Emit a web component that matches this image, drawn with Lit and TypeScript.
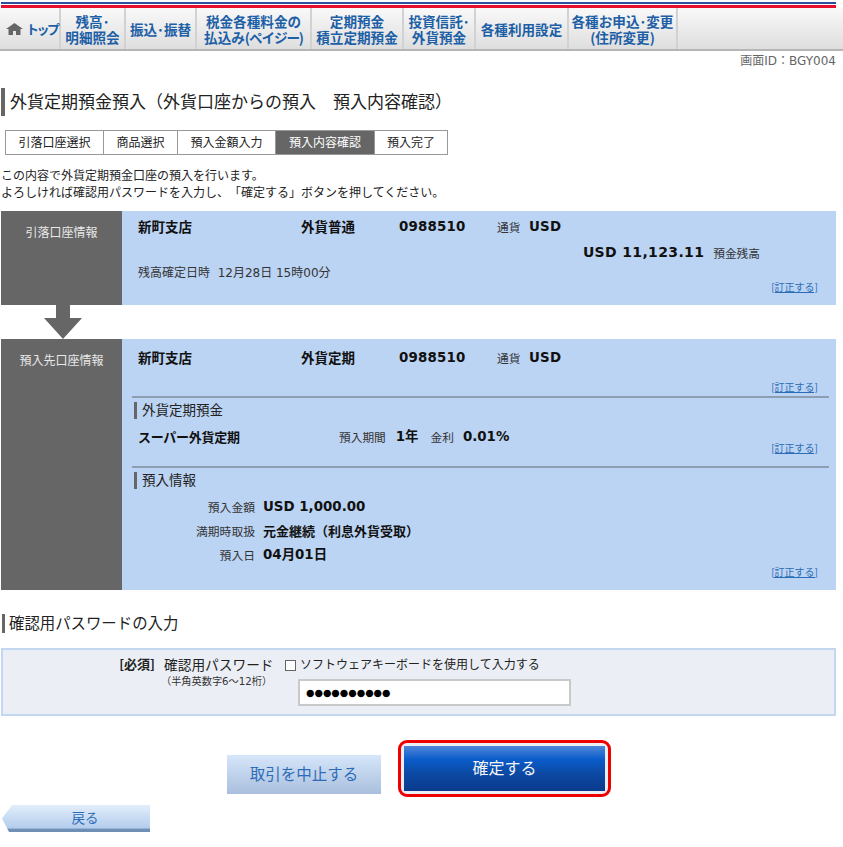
import { LitElement, html, css } from "lit";
import { customElement } from "lit/decorators.js";

@customElement("app-root")
export class AppRoot extends LitElement {
  static styles = css`
    :host { display: block; width: 843px; height: 847px; overflow: hidden; background: #fff; color: #222; font-family: "Noto Sans CJK JP", "DejaVu Sans", sans-serif; font-size: 12px; line-height: 17px; text-spacing-trim: space-all; }
    .stripe { margin: 2px 7px 0 1px; height: 6px; box-sizing: border-box; border-top: 2px solid #2f4f9f; background: linear-gradient(#fff 0 1px, #e60f2d 1px); }
    nav { display: flex; height: 43px; box-sizing: border-box; border-bottom: 2px solid #b5b5b5; background: linear-gradient(#f9f9f9, #dedede); padding-left: 1px; }
    nav a { display: flex; align-items: center; justify-content: center; text-align: center; white-space: nowrap; box-sizing: border-box; border-right: 2px solid #d2d2d2; font-size: 13.6px; font-weight: 700; line-height: 16px; color: #1d5fa6; }
    nav a.top { gap: 3px; font-size: 13px; letter-spacing: -2.5px; justify-content: flex-start; padding-left: 5px; }
    .tight { letter-spacing: -1.1px; }
    .sid { text-align: right; padding-right: 7px; height: 20px; line-height: 20px; color: #666; font-size: 12px; font-family: "DejaVu Sans", "Noto Sans CJK JP", sans-serif; }
    h1 { margin: 17px 0 0 1px; height: 28px; border-left: 4px solid #666; padding-left: 5px; font-size: 17px; font-weight: 400; line-height: 26px; color: #222; }
    .steps { display: flex; margin: 14px 0 0 5px; width: 443px; height: 25px; box-sizing: border-box; border: 1px solid #999; }
    .steps div { display: flex; align-items: center; justify-content: center; box-sizing: border-box; border-right: 1px solid #999; padding-bottom: 2px; font-size: 12px; }
    .steps div:last-child { border-right: 0; }
    .steps .on { background: #666; color: #fff; }
    .msg { margin: 11px 0 0 1px; line-height: 17px; }
    .panel { display: flex; margin: 11px 7px 0 1px; background: #bcd4f3; }
    .side { flex: none; width: 121px; background: #666; color: #e8e8e8; text-align: center; font-size: 12px; padding-top: 12px; box-sizing: border-box; }
    .body { flex: 1; padding: 6px 7px 0 10px; }
    .p1 { height: 94px; }
    .row { display: grid; grid-template-columns: 163px 98px 98px 32px auto; align-items: center; height: 18px; padding-left: 6px; font-size: 13.5px; font-weight: 700; color: #111; }
    .num { font-family: "DejaVu Sans", "Noto Sans CJK JP", sans-serif; font-size: 13.4px; letter-spacing: 0.2px; font-weight: 700; }
    .lab { font-size: 11.7px; font-weight: 400; color: #333; }
    .bal { display: flex; justify-content: flex-end; align-items: center; gap: 9px; height: 20px; margin-top: 7px; padding-right: 69px; }
    .bal .num { font-size: 14px; letter-spacing: 0.35px; color: #111; }
    .asof { margin-top: 2px; padding-left: 6px; height: 18px; line-height: 18px; font-size: 12px; color: #333; font-family: "DejaVu Sans", "Noto Sans CJK JP", sans-serif; }
    .fix { display: block; text-align: right; font-size: 10px; line-height: 12px; color: #2a6cb5; text-decoration: underline; padding-right: 11px; }
    .fix-a { margin-top: -1px; }
    .fix-b { margin-top: 15px; }
    .fix-c { margin-top: -3px; }
    .fix-d { margin-top: 1px; }
    .arrow { display: block; margin-left: 44px; }
    .p2 { margin-top: 0; height: 251px; }
    .p2 .body { padding-top: 9px; }
    .sep { border-top: 2px solid #8d9db2; margin-top: 3px; }
    .sep-b { margin-top: 12px; }
    .sub { margin: 4px 0 0 2px; height: 17px; border-left: 3px solid #666; padding-left: 5px; font-size: 13.5px; line-height: 15px; color: #222; }
    .prod { display: flex; align-items: center; height: 18px; margin-top: 8px; padding-left: 6px; font-size: 13px; font-weight: 700; color: #111; }
    .prod .name { width: 201px; letter-spacing: -0.25px; }
    .prod .num { letter-spacing: 0; }
    .g10 { margin-left: 10px; }
    .g12 { margin-left: 12px; }
    .g9 { margin-left: 9px; }
    .info { display: grid; grid-template-columns: 123px auto; column-gap: 8px; row-gap: 5.5px; align-items: center; margin-top: 9px; font-size: 13px; font-weight: 700; color: #111; }
    .info > div { height: 18.5px; line-height: 18.5px; }
    .info .lab { text-align: right; font-size: 11.8px; }
    .info .num { letter-spacing: 0; }
    .pw-h { margin: 24px 0 0 2px; height: 19px; border-left: 3px solid #666; padding-left: 4px; font-size: 15.4px; line-height: 17px; color: #222; }
    .pw { display: flex; margin: 15px 7px 0 1px; height: 68px; box-sizing: border-box; border: 2px solid #c3d7f0; background: #ebeff5; padding-top: 5px; }
    .pw .l { width: 152px; text-align: right; font-size: 13px; font-weight: 700; line-height: 18px; color: #222; flex: none; }
    .pw .m { width: 127px; padding-left: 9px; box-sizing: border-box; flex: none; font-size: 13.7px; line-height: 18px; color: #222; }
    .pw small { display: block; font-size: 10.2px; line-height: 12px; margin-left: -3px; padding-top: 3px; color: #333; white-space: nowrap; font-family: "DejaVu Sans", "Noto Sans CJK JP", sans-serif; }
    .pw .r { flex: none; width: 300px; }
    .chk { display: flex; align-items: center; gap: 4px; font-size: 12px; line-height: 18px; color: #222; margin-left: 3px; }
    .chk i { display: block; width: 9px; height: 9px; background: #fff; border: 1px solid #666; margin-top: 3px; }
    .inp { margin: 6px 0 0 16px; width: 273px; height: 27px; box-sizing: border-box; border: 2px solid #c9c9c9; background: #fff; padding-left: 6px; font-size: 9.7px; line-height: 23px; color: #000; font-family: "DejaVu Sans", sans-serif; }
    .btns { display: flex; align-items: flex-end; margin: 24px 0 0 227px; height: 57px; }
    .cancel { display: flex; align-items: center; justify-content: center; width: 154px; height: 39px; margin-bottom: 3px; padding-bottom: 2px; box-sizing: border-box; background: linear-gradient(#d6e6fa, #a9bfdd); color: #2d6cb8; font-size: 15.5px; }
    .ok { display: flex; margin-left: 17px; width: 213px; height: 57px; box-sizing: border-box; border: 3px solid #ee0000; border-radius: 9px; background: #ebeff5; padding: 3px; }
    .ok span { flex: 1; display: flex; align-items: center; justify-content: center; padding-bottom: 2px; background: linear-gradient(#4f86d8, #0a5ccb 30%, #0c4aa5 60%, #0a3a8c); color: #f4f4f4; font-size: 16px; }
    .back { display: flex; align-items: center; justify-content: center; margin: 8px 0 0 2px; width: 148px; height: 27px; box-sizing: border-box; padding: 0 0 3px 18px; clip-path: polygon(10px 0, 100% 0, 100% 100%, 7px 100%, 0 50%); background: linear-gradient(#e2eefc, #b4cdec 85%, #6f8fb5 90%); color: #2d6cb8; font-size: 13.5px; }
  `;

  render() {
    return html`
      <div class="stripe"></div>
      <nav>
        <a class="top" style="width:60px">
          <svg width="17" height="12" viewBox="0 0 17 12"><path fill="#666" d="M8.500 0 17 6h-2.500v6H10V8H7v4H2.500V6H0z"/></svg><span>トップ</span>
        </a>
        <a style="width:65px"><span>残高･<br />明細照会</span></a>
        <a style="width:71px"><span>振込･振替</span></a>
        <a style="width:115px"><span>税金各種料金の<br />払込み<span class="tight">(ペイジー)</span></span></a>
        <a style="width:92px"><span>定期預金<br />積立定期預金</span></a>
        <a style="width:72px"><span>投資信託･<br />外貨預金</span></a>
        <a style="width:93px"><span>各種利用設定</span></a>
        <a style="width:109px"><span>各種お申込･変更<br />(住所変更)</span></a>
      </nav>
      <div class="sid">画面ID：BGY004</div>
      <h1>外貨定期預金預入（外貨口座からの預入　預入内容確認）</h1>
      <div class="steps">
        <div style="width:98px">引落口座選択</div>
        <div style="width:74px">商品選択</div>
        <div style="width:98px">預入金額入力</div>
        <div class="on" style="width:99px">預入内容確認</div>
        <div style="width:72px">預入完了</div>
      </div>
      <div class="msg">この内容で外貨定期預金口座の預入を行います。<br />よろしければ確認用パスワードを入力し、「確定する」ボタンを押してください。</div>
      <div class="panel p1">
        <div class="side">引落口座情報</div>
        <div class="body">
          <div class="row"><span>新町支店</span><span>外貨普通</span><span class="num">0988510</span><span class="lab">通貨</span><span class="num">USD</span></div>
          <div class="bal"><span class="num">USD 11,123.11</span><span class="lab">預金残高</span></div>
          <div class="asof">残高確定日時&nbsp; 12月28日 15時00分</div>
          <a class="fix fix-a">[訂正する]</a>
        </div>
      </div>
      <svg class="arrow" width="38" height="34" viewBox="0 0 38 34"><path fill="#666" d="M12 0h14v13h12L19 34 0 13h12z" /></svg>
      <div class="panel p2">
        <div class="side">預入先口座情報</div>
        <div class="body">
          <div class="row"><span>新町支店</span><span>外貨定期</span><span class="num">0988510</span><span class="lab">通貨</span><span class="num">USD</span></div>
          <a class="fix fix-b">[訂正する]</a>
          <div class="sep"></div>
          <div class="sub">外貨定期預金</div>
          <div class="prod"><span class="name">スーパー外貨定期</span><span class="lab">預入期間</span><span class="num g10">1年</span><span class="lab g12">金利</span><span class="num g9">0.01%</span></div>
          <a class="fix fix-c">[訂正する]</a>
          <div class="sep sep-b"></div>
          <div class="sub">預入情報</div>
          <div class="info">
            <div class="lab">預入金額</div><div class="num">USD 1,000.00</div>
            <div class="lab">満期時取扱</div><div>元金継続（利息外貨受取）</div>
            <div class="lab">預入日</div><div class="num">04月01日</div>
          </div>
          <a class="fix fix-d">[訂正する]</a>
        </div>
      </div>
      <div class="pw-h">確認用パスワードの入力</div>
      <div class="pw">
        <div class="l">[必須]</div>
        <div class="m">確認用パスワード<small>（半角英数字6～12桁）</small></div>
        <div class="r">
          <div class="chk"><i></i>ソフトウェアキーボードを使用して入力する</div>
          <div class="inp">●●●●●●●●●●</div>
        </div>
      </div>
      <div class="btns">
        <div class="cancel">取引を中止する</div>
        <div class="ok"><span>確定する</span></div>
      </div>
      <div class="back">戻る</div>
    `;
  }
}
